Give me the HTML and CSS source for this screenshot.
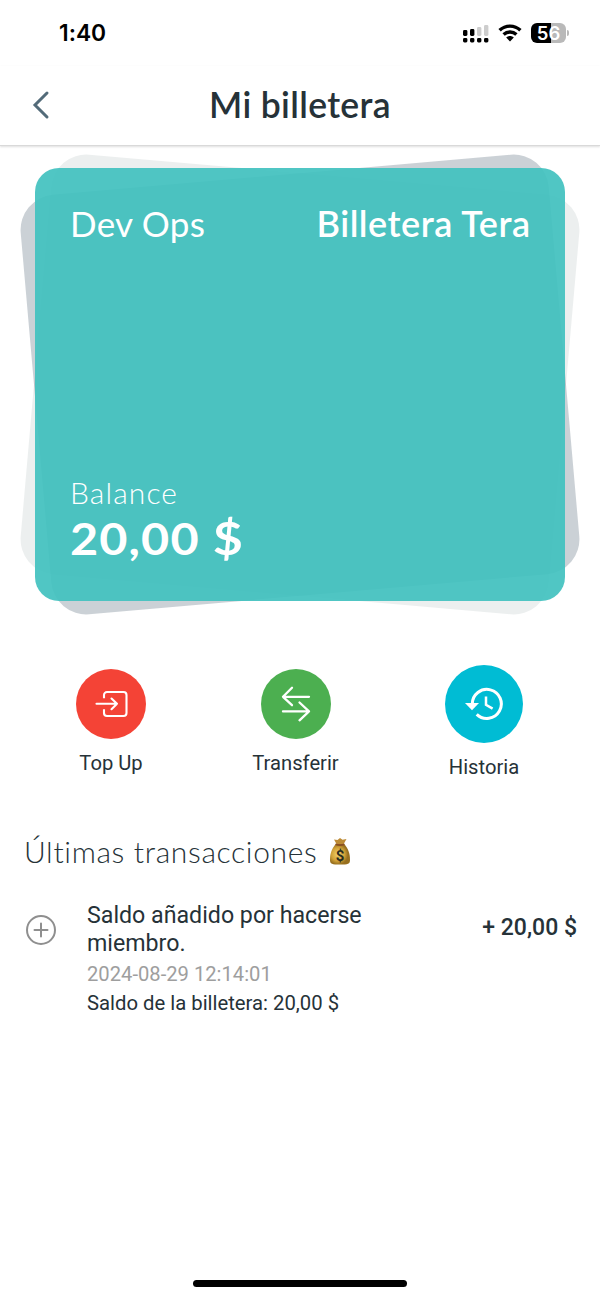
FILE: index.html
```html
<!DOCTYPE html>
<html lang="es">
<head>
<meta charset="utf-8">
<title>Mi billetera</title>
<link rel="stylesheet" href="styles.css">
</head>
<body>
<div class="screen">
  <div class="status">
    <span class="clock">1:40</span>
    <div class="indicators">
      <svg width="26" height="19" viewBox="0 0 26 19">
        <g fill="#000"><rect x="0" y="6" width="4.4" height="6" rx="1.4"/><rect x="7" y="5" width="4.4" height="7" rx="1.4"/><rect x="0" y="14" width="4.4" height="4.4" rx="1.4"/><rect x="7" y="14" width="4.4" height="4.4" rx="1.4"/><rect x="14" y="14" width="4.4" height="4.4" rx="1.4"/><rect x="21" y="14" width="4.4" height="4.4" rx="1.4"/></g>
        <g fill="#cdcdcd"><rect x="14" y="3" width="4.4" height="9" rx="1.4"/><rect x="21" y="1" width="4.4" height="11" rx="1.4"/></g>
      </svg>
      <svg class="wifi" width="24" height="18" viewBox="0 0 24 18">
        <g fill="none" stroke="#000" stroke-width="3.4"><path d="M1.6 6.3C7.4 .7 16.6 .7 22.4 6.3"/><path d="M5.6 10.5C9.2 7.2 14.8 7.2 18.4 10.5"/></g>
        <path d="M8.2 13.6C10.5 11.6 13.5 11.6 15.8 13.6L12 17.4Z"/>
      </svg>
      <div class="battery"><span>56</span></div>
      <div class="battery-tip"></div>
    </div>
  </div>
  <header class="bar">
    <svg class="back" width="18" height="30" viewBox="0 0 18 30"><path d="M15 3L3 15L15 27" fill="none" stroke="#536b79" stroke-width="3" stroke-linecap="round"/></svg>
    <h1>Mi billetera</h1>
  </header>
  <section class="stack">
    <div class="sheet light"></div>
    <div class="sheet dark"></div>
    <div class="card">
      <div class="card-top"><span class="owner">Dev Ops</span><span class="wallet">Billetera Tera</span></div>
      <div><div class="label">Balance</div><div class="amount">20,00 <span class="dollar">$</span></div></div>
    </div>
  </section>
  <nav class="actions">
    <div class="action topup">
      <div class="disc red"><svg width="34" height="28" viewBox="0 0 34 28" fill="none" stroke="#fff" stroke-width="2.1" stroke-linecap="round" stroke-linejoin="round"><path d="M10 8.3V5a3 3 0 0 1 3-3H29.5a3 3 0 0 1 3 3V23a3 3 0 0 1-3 3H13a3 3 0 0 1-3-3V19.2" stroke-linecap="butt"/><path d="M2.5 13.8H23M17.5 8.5L23 13.8L17.5 19.2"/></svg></div>
      <span>Top Up</span>
    </div>
    <div class="action transfer">
      <div class="disc green"><svg width="30" height="36" viewBox="0 0 30 36" fill="none" stroke="#fff" stroke-width="2.3" stroke-linecap="round" stroke-linejoin="round"><path d="M28 10.8H2M11 1.8L2 10.8L11 19.2M2 25.4H28M18.5 16.5L28 25.4L18.5 34.3"/></svg></div>
      <span>Transferir</span>
    </div>
    <div class="action history">
      <div class="disc cyan"><svg width="38" height="34" viewBox="0 0 38 34"><path d="M7.3 17A14.5 14.5 0 1 1 11.7 27.3" fill="none" stroke="#fff" stroke-width="3"/><path d="M0 16H14L7 23.3Z" fill="#fff"/><path d="M21 9.5V17.8L27.6 21.7" fill="none" stroke="#fff" stroke-width="2.5"/></svg></div>
      <span>Historia</span>
    </div>
  </nav>
  <h2><span>Últimas transacciones</span>
    <svg width="24" height="30" viewBox="0 0 24 30">
      <defs><radialGradient id="bag" cx=".4" cy=".5"><stop offset="0" stop-color="#f4d269"/><stop offset=".65" stop-color="#d1a238"/><stop offset="1" stop-color="#98701f"/></radialGradient></defs>
      <path d="M8 8C4 12 2 17 2 24C2 28 4 28.6 12 28.6S22 28 22 24C22 17 20 12 16 8Z" fill="url(#bag)"/>
      <path d="M8.5 8L6 3.5L9.5 4L12 2L14.5 3.7L18.5 3L15.7 8Z" fill="#bd8b35"/>
      <path d="M7.5 8.3Q12 10 16.5 8.3" stroke="#8a4f22" stroke-width="1.6" fill="none"/>
      <text x="12" y="24.5" text-anchor="middle" class="bag-sign">$</text>
    </svg>
  </h2>
  <article class="entry">
    <svg class="plus" width="32" height="32" viewBox="0 0 32 32" fill="none" stroke="#8f8f8f" stroke-width="2"><circle cx="16" cy="16" r="14"/><path d="M9.5 16H22.5M16 9.5V22.5" stroke-linecap="round"/></svg>
    <div class="details">
      <p class="title">Saldo añadido por hacerse<br>miembro.</p>
      <p class="date">2024-08-29 12:14:01</p>
      <p class="saldo">Saldo de la billetera: 20,00 $</p>
    </div>
    <strong class="sum">+ 20,00 $</strong>
  </article>
  <div class="home"></div>
</div>
</body>
</html>
```
FILE: styles.css
```css
* { box-sizing: border-box; }
body { margin: 0; background: #fff; color: #263238; font-family: Roboto, sans-serif; font-variant-ligatures: none; }
h1, h2, p { margin: 0; font-weight: 400; }
svg { display: block; flex: none; }
span { white-space: nowrap; }
.screen { width: 600px; height: 1299px; display: flex; flex-direction: column; overflow: hidden; }
.status { height: 66px; padding: 0 34px 0 59px; display: flex; justify-content: space-between; align-items: center; flex: none; }
.clock { font-family: Inter, sans-serif; font-weight: 600; font-size: 22.8px; line-height: 28px; color: #000; }
.indicators { display: flex; align-items: center; }
.wifi { margin: 0 9px 0 9px; }
.battery { width: 35px; height: 20px; border-radius: 6px; background: linear-gradient(90deg, #000 56%, #b9b9b9 56%); color: #fff; font: 600 18.5px/20px Inter, sans-serif; text-align: center; }
.battery-tip { width: 2px; height: 6px; margin: 0 -3px 0 1px; border-radius: 0 3px 3px 0; background: #b9b9b9; }
.bar { height: 80px; padding-bottom: 2px; flex: none; display: grid; grid-template-columns: 60px 1fr 60px; align-items: center; border-bottom: 1px solid #d9d9d9; box-shadow: 0 1px 2px rgba(0,0,0,.13); }
.back { margin-left: 32px; }
h1 { text-align: center; font-family: Lato, sans-serif; font-weight: 600; font-size: 35.5px; line-height: 40px; letter-spacing: .35px; white-space: nowrap; }
.stack { display: grid; place-items: center; margin-top: 22px; height: 433px; flex: none; }
.stack > * { grid-area: 1 / 1; }
.sheet { width: 530px; height: 421px; border-radius: 35px; }
.light { background: rgba(55,80,85,.095); transform: rotate(5deg); }
.dark { background: rgba(38,64,84,.24); transform: rotate(-5deg); }
.card { width: 530px; height: 433px; border-radius: 24px; padding: 33px 35px 34px; z-index: 1; background: rgba(65,193,191,.92); color: #fff; display: flex; flex-direction: column; justify-content: space-between; font-family: Lato, sans-serif; }
.card-top { display: flex; justify-content: space-between; font-size: 35px; line-height: 44px; }
.owner { letter-spacing: .3px; }
.wallet { font-weight: 600; font-size: 36px; letter-spacing: .5px; margin-right: -.5px; }
.label { font-size: 30px; line-height: 38px; font-weight: 300; letter-spacing: 1.1px; }
.amount { width: max-content; font-size: 43px; line-height: 56px; font-weight: 700; letter-spacing: 1px; transform: scaleX(1.13); transform-origin: left; }
.dollar { font-size: 46px; line-height: 50px; }
.actions { margin-top: 64px; height: 116px; flex: none; padding: 0 77px 0 76px; display: flex; justify-content: space-between; align-items: flex-start; }
.action { display: flex; flex-direction: column; align-items: center; font-size: 20.2px; line-height: 24px; }
.topup, .transfer { padding-top: 4px; }
.topup { width: 70px; }
.transfer { width: 87px; }
.history { width: 78px; }
.disc { width: 70px; height: 70px; border-radius: 50%; display: grid; place-items: center; margin-bottom: 12px; }
.red { background: #f44336; }
.green { background: #4caf50; }
.cyan { width: 78px; height: 78px; background: #00bcd4; }
h2 { margin: 50px 0 0 24px; height: 40px; flex: none; display: flex; align-items: center; gap: 11px; font-family: Lato, sans-serif; font-weight: 300; font-size: 30px; line-height: 38px; letter-spacing: .65px; }
.bag-sign { font: 700 15px Roboto, sans-serif; letter-spacing: 0; fill: #292c20; }
.entry { display: grid; grid-template-columns: 62px 1fr auto; padding: 0 23px 0 25px; margin-top: 31px; align-items: start; }
.plus { margin-top: 12px; }
.title { font-size: 23.2px; line-height: 27.5px; }
.date { margin-top: 5px; font-size: 20.2px; line-height: 24px; color: #9e9e9e; }
.saldo { margin-top: 5px; font-size: 20.3px; line-height: 24px; }
.sum { margin-top: 12px; font-size: 23px; line-height: 28px; font-weight: 500; }
.home { width: 214px; height: 7px; margin: auto auto 12px; border-radius: 4px; background: #000; }
```
